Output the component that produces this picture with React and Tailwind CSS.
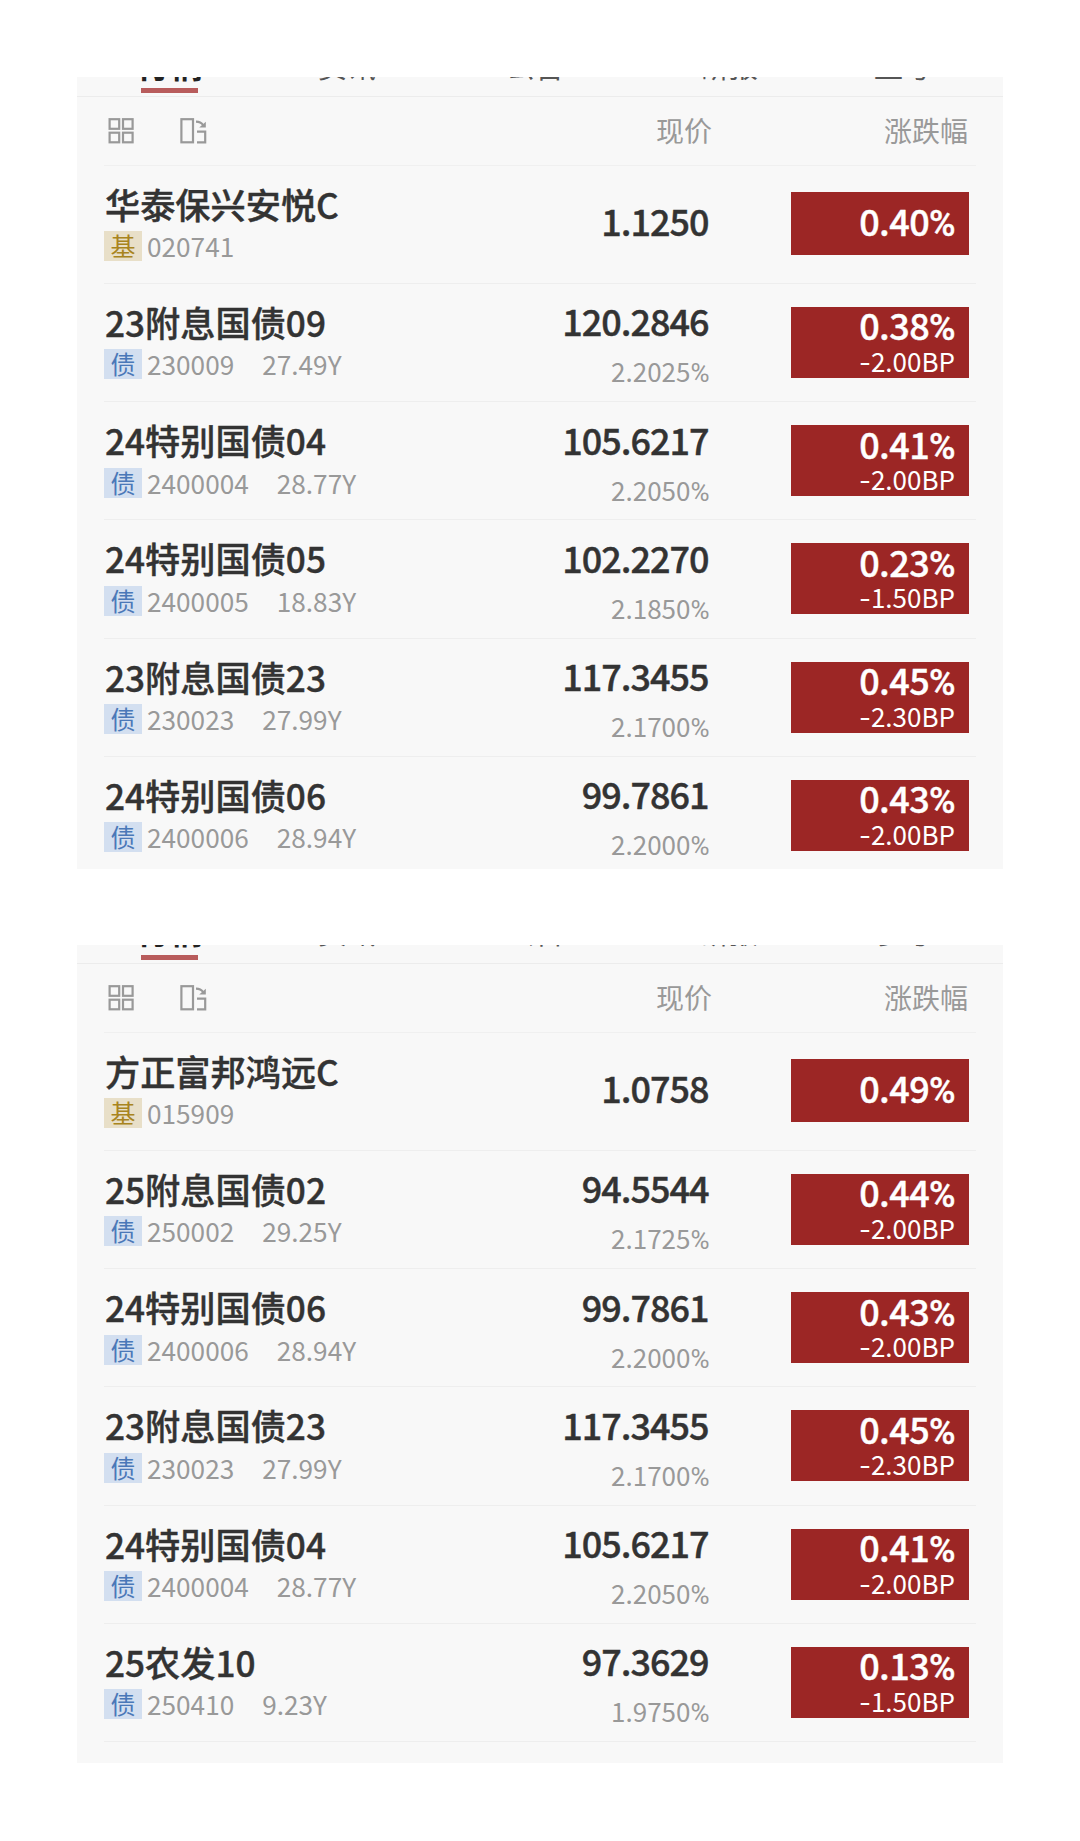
const fundA = [
  ["华泰保兴安悦C", "020741", "", "1.1250", "", "0.40", ""],
  ["23附息国债09", "230009", "27.49Y", "120.2846", "2.2025", "0.38", "2.00BP"],
  ["24特别国债04", "2400004", "28.77Y", "105.6217", "2.2050", "0.41", "2.00BP"],
  ["24特别国债05", "2400005", "18.83Y", "102.2270", "2.1850", "0.23", "1.50BP"],
  ["23附息国债23", "230023", "27.99Y", "117.3455", "2.1700", "0.45", "2.30BP"],
  ["24特别国债06", "2400006", "28.94Y", "99.7861", "2.2000", "0.43", "2.00BP"],
];
const fundB = [
  ["方正富邦鸿远C", "015909", "", "1.0758", "", "0.49", ""],
  ["25附息国债02", "250002", "29.25Y", "94.5544", "2.1725", "0.44", "2.00BP"],
  ["24特别国债06", "2400006", "28.94Y", "99.7861", "2.2000", "0.43", "2.00BP"],
  ["23附息国债23", "230023", "27.99Y", "117.3455", "2.1700", "0.45", "2.30BP"],
  ["24特别国债04", "2400004", "28.77Y", "105.6217", "2.2050", "0.41", "2.00BP"],
  ["25农发10", "250410", "9.23Y", "97.3629", "1.9750", "0.13", "1.50BP"],
];

function GridIcon() {
  return (
    <svg width="26" height="26" viewBox="0 0 26 26" fill="none" stroke="#999" strokeWidth="2.2">
      <rect x="1.6" y="1.2" width="9.6" height="9.6" />
      <rect x="15" y="1.2" width="9.6" height="9.6" />
      <rect x="1.6" y="14.7" width="9.6" height="9.6" />
      <rect x="15" y="14.7" width="9.6" height="9.6" />
    </svg>
  );
}

function SwitchIcon() {
  return (
    <svg width="27" height="26" viewBox="0 0 27 26" fill="none" stroke="#999" strokeWidth="2.2">
      <rect x="1.4" y="1.2" width="11.6" height="23.1" />
      <path d="M16 3.700c3.500 0 5.500 1 7 3.300" />
      <path d="M25.800 3.800v5.800h-6.600z" fill="#999" stroke="none" />
      <path d="M17 13.600h8.200v10.700h-8.200" />
    </svg>
  );
}

function Percent({ value }) {
  return (
    <span>
      {value}
      <span className="font-['Roboto',sans-serif]">%</span>
    </span>
  );
}

function Row({ row }) {
  const [name, code, term, price, rate, change, bp] = row;
  return (
    <div className="mx-[27px] flex h-[118.300px] shrink-0 border-b border-[#eeeeee]">
      <div className="w-[360px] pt-[17px]">
        <div className="ml-px h-[42px] whitespace-nowrap text-[35.200px] leading-[42px] font-medium text-[#333] [-webkit-text-stroke:0.400px_#333]">{name}</div>
        <div className="mt-[6.500px] flex h-[30px] items-center text-[26.200px] leading-[30px] text-[#999]">
          <span className={term ? "flex h-[30px] w-[38px] justify-center bg-[#d3dff0] text-[25px] leading-[29px] text-[#4a78b8]" : "flex h-[30px] w-[38px] justify-center bg-[#e8dfc8] text-[25px] leading-[29px] text-[#a88420]"}>
            {term ? "债" : "基"}
          </span>
          <span className="ml-[5px]">{code}</span>
          {term && <span className="ml-[28px]">{term}</span>}
        </div>
      </div>
      <div className="w-[244.500px] text-right">
        <div className={term ? "mt-[15.500px] text-[36px] leading-[42px] font-medium tracking-[-1px] text-[#333] [-webkit-text-stroke:0.400px_#333]" : "mt-[33px] text-[36px] leading-[42px] font-medium tracking-[-1px] text-[#333] [-webkit-text-stroke:0.400px_#333]"}>{price}</div>
        {rate && <div className="-mr-px mt-[15px] text-[26px] leading-[30px] text-[#999]"><Percent value={rate} /></div>}
      </div>
      <div className={term ? "mt-[23px] mr-[7px] ml-auto flex h-[71px] w-[178px] flex-col items-end bg-[#9c2625] pr-[14px] text-white" : "mt-[26px] mr-[7px] ml-auto flex h-[63px] w-[178px] flex-col items-end bg-[#9c2625] pt-[8.500px] pr-[14px] text-white"}>
        <div className={term ? "-mt-[2.500px] h-[41.500px] text-[36px] leading-[40px] font-medium tracking-[-0.600px] [-webkit-text-stroke:0.400px_white]" : "h-[40px] text-[36px] leading-[40px] font-medium tracking-[-0.600px] [-webkit-text-stroke:0.400px_white]"}><Percent value={change} /></div>
        {bp && (
          <div className="text-[26px] leading-[30px]">
            <span className="font-['Inter',sans-serif]">-</span>
            {bp}
          </div>
        )}
      </div>
    </div>
  );
}

function Tabs({ labels, second }) {
  return (
    <div className={second ? "h-[10px] shrink-0 overflow-hidden" : "h-[11px] shrink-0 overflow-hidden"}>
      <div className={second ? "-mt-[31px] flex h-[34px] whitespace-nowrap text-[29px] leading-[34px] text-[#555]" : "-mt-[29.500px] flex h-[34px] whitespace-nowrap text-[29px] leading-[34px] text-[#555]"}>
        <span className="ml-[59px] w-[182px] text-[34px] leading-[32px] font-bold text-[#222]">{labels[0]}</span>
        <span className="w-[188px]">{labels[1]}</span>
        <span className="w-[194px]">{labels[2]}</span>
        <span className="w-[174px]">{labels[3]}</span>
        <span>{labels[4]}</span>
      </div>
    </div>
  );
}

function Panel({ rows, labels, className, second }) {
  return (
    <section className={className}>
      <Tabs labels={labels} second={second} />
      <div className="ml-[64px] h-[5px] w-[57px] shrink-0 bg-[#b85c5c]" />
      <div className="mt-[3px] h-px shrink-0 bg-[#ececec]" />
      <div className="mx-[27px] flex h-[68.500px] shrink-0 items-center border-b border-[#f0f0f0] pl-[4px] text-[28px] text-[#999]">
        <GridIcon />
        <span className="ml-[46px]"><SwitchIcon /></span>
        <span className="-mt-[2px] ml-auto">现价</span>
        <span className="-mt-[2px] mr-[8px] ml-[172px]">涨跌幅</span>
      </div>
      {rows.map((row) => <Row key={row[0]} row={row} />)}
    </section>
  );
}

export default function App() {
  return (
    <main className="flex h-[1841px] w-[1080px] flex-col bg-white pt-[77px] pl-[77px] font-['Noto_Sans_CJK_SC',sans-serif]">
      <Panel rows={fundA} labels={["行情", "资讯", "公告", "研报", "盘考"]} className="flex h-[792px] w-[926px] shrink-0 flex-col overflow-hidden bg-[#f8f8f8]" />
      <Panel second rows={fundB} labels={["行情", "资讯", "公告", "研报", "参考"]} className="mt-[76px] flex h-[818px] w-[926px] shrink-0 flex-col overflow-hidden bg-[#f8f8f8]" />
    </main>
  );
}
